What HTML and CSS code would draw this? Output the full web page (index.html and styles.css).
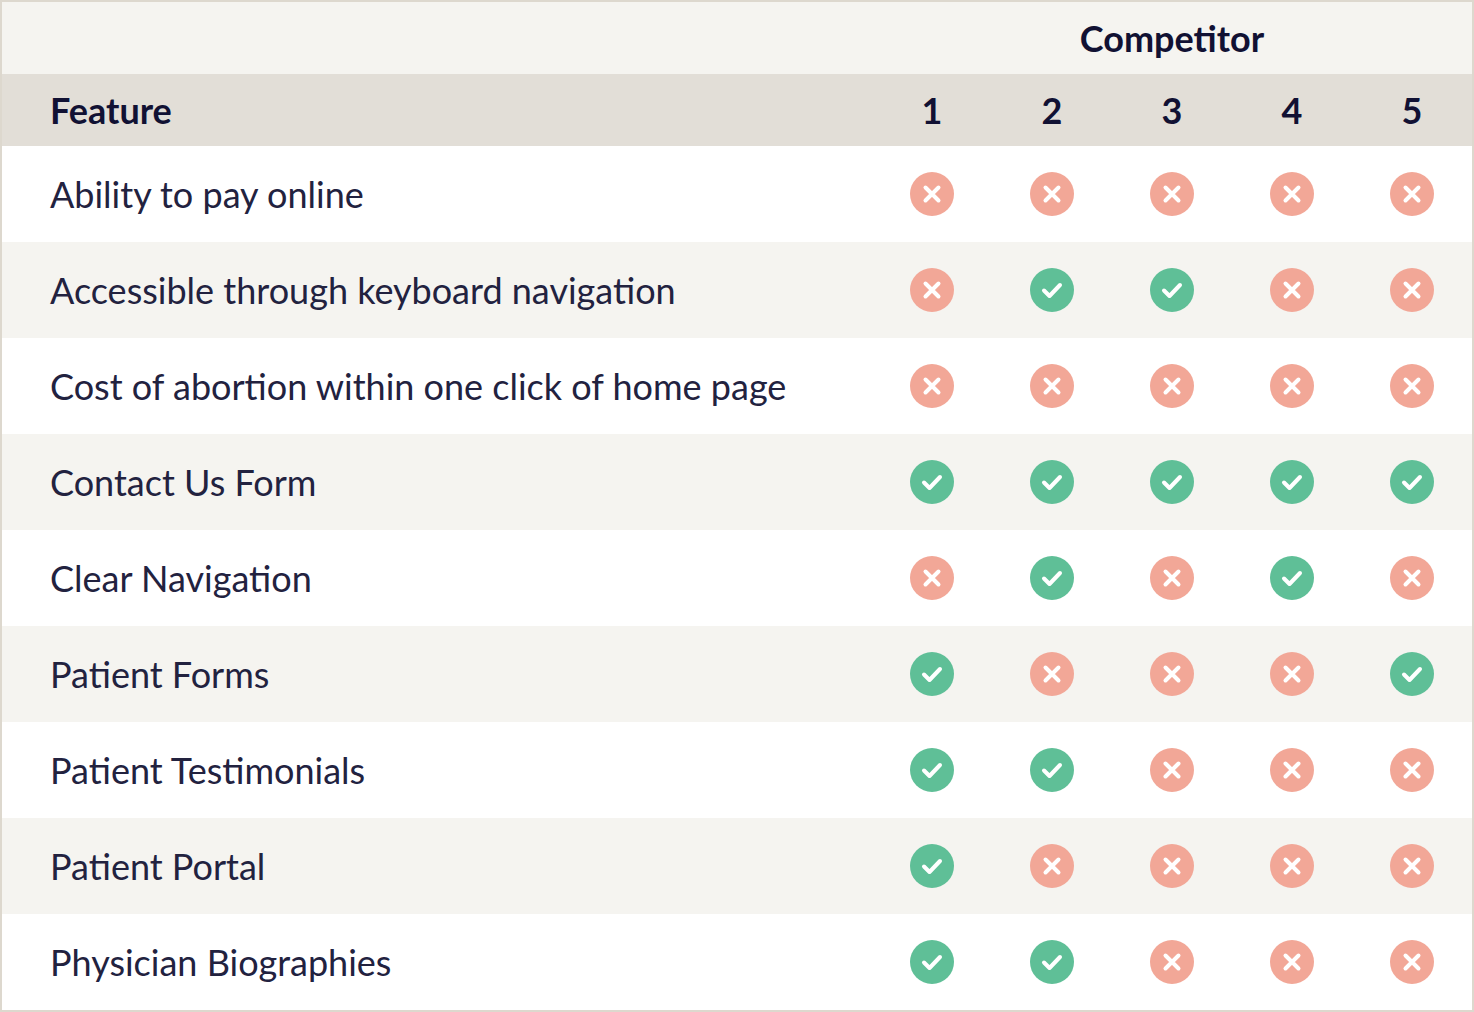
FILE: index.html
```html
<!DOCTYPE html>
<html lang="en">
<head>
<meta charset="utf-8">
<title>Competitor comparison</title>
<link rel="stylesheet" href="styles.css">
</head>
<body>
<svg width="0" height="0" class="defs" aria-hidden="true">
  <symbol id="no" viewBox="0 0 44 44">
    <circle cx="22" cy="22" r="22" fill="#f2a797"/>
    <path d="M15.5 15.5 L28.5 28.5 M28.5 15.5 L15.5 28.5" stroke="#fff" stroke-width="4" stroke-linecap="round" fill="none"/>
  </symbol>
  <symbol id="yes" viewBox="0 0 44 44">
    <circle cx="22" cy="22" r="22" fill="#5fbf97"/>
    <path d="M14 22.5 L19.5 28 L30 17" stroke="#fff" stroke-width="4" stroke-linecap="round" stroke-linejoin="round" fill="none"/>
  </symbol>
</svg>
<div class="frame">
<table class="cmp">
  <thead>
    <tr class="top">
      <th class="feat"></th>
      <th colspan="5" class="comp">Competitor</th>
    </tr>
    <tr class="head">
      <th class="feat">Feature</th>
      <th>1</th><th>2</th><th>3</th><th>4</th><th>5</th>
    </tr>
  </thead>
  <tbody>
    <tr>
      <td class="feat">Ability to pay online</td>
      <td><svg class="ic" width="44" height="44"><use href="#no"/></svg></td>
      <td><svg class="ic" width="44" height="44"><use href="#no"/></svg></td>
      <td><svg class="ic" width="44" height="44"><use href="#no"/></svg></td>
      <td><svg class="ic" width="44" height="44"><use href="#no"/></svg></td>
      <td><svg class="ic" width="44" height="44"><use href="#no"/></svg></td>
    </tr>
    <tr>
      <td class="feat">Accessible through keyboard navigation</td>
      <td><svg class="ic" width="44" height="44"><use href="#no"/></svg></td>
      <td><svg class="ic" width="44" height="44"><use href="#yes"/></svg></td>
      <td><svg class="ic" width="44" height="44"><use href="#yes"/></svg></td>
      <td><svg class="ic" width="44" height="44"><use href="#no"/></svg></td>
      <td><svg class="ic" width="44" height="44"><use href="#no"/></svg></td>
    </tr>
    <tr>
      <td class="feat">Cost of abortion within one click of home page</td>
      <td><svg class="ic" width="44" height="44"><use href="#no"/></svg></td>
      <td><svg class="ic" width="44" height="44"><use href="#no"/></svg></td>
      <td><svg class="ic" width="44" height="44"><use href="#no"/></svg></td>
      <td><svg class="ic" width="44" height="44"><use href="#no"/></svg></td>
      <td><svg class="ic" width="44" height="44"><use href="#no"/></svg></td>
    </tr>
    <tr>
      <td class="feat">Contact Us Form</td>
      <td><svg class="ic" width="44" height="44"><use href="#yes"/></svg></td>
      <td><svg class="ic" width="44" height="44"><use href="#yes"/></svg></td>
      <td><svg class="ic" width="44" height="44"><use href="#yes"/></svg></td>
      <td><svg class="ic" width="44" height="44"><use href="#yes"/></svg></td>
      <td><svg class="ic" width="44" height="44"><use href="#yes"/></svg></td>
    </tr>
    <tr>
      <td class="feat">Clear Navigation</td>
      <td><svg class="ic" width="44" height="44"><use href="#no"/></svg></td>
      <td><svg class="ic" width="44" height="44"><use href="#yes"/></svg></td>
      <td><svg class="ic" width="44" height="44"><use href="#no"/></svg></td>
      <td><svg class="ic" width="44" height="44"><use href="#yes"/></svg></td>
      <td><svg class="ic" width="44" height="44"><use href="#no"/></svg></td>
    </tr>
    <tr>
      <td class="feat">Patient Forms</td>
      <td><svg class="ic" width="44" height="44"><use href="#yes"/></svg></td>
      <td><svg class="ic" width="44" height="44"><use href="#no"/></svg></td>
      <td><svg class="ic" width="44" height="44"><use href="#no"/></svg></td>
      <td><svg class="ic" width="44" height="44"><use href="#no"/></svg></td>
      <td><svg class="ic" width="44" height="44"><use href="#yes"/></svg></td>
    </tr>
    <tr>
      <td class="feat">Patient Testimonials</td>
      <td><svg class="ic" width="44" height="44"><use href="#yes"/></svg></td>
      <td><svg class="ic" width="44" height="44"><use href="#yes"/></svg></td>
      <td><svg class="ic" width="44" height="44"><use href="#no"/></svg></td>
      <td><svg class="ic" width="44" height="44"><use href="#no"/></svg></td>
      <td><svg class="ic" width="44" height="44"><use href="#no"/></svg></td>
    </tr>
    <tr>
      <td class="feat">Patient Portal</td>
      <td><svg class="ic" width="44" height="44"><use href="#yes"/></svg></td>
      <td><svg class="ic" width="44" height="44"><use href="#no"/></svg></td>
      <td><svg class="ic" width="44" height="44"><use href="#no"/></svg></td>
      <td><svg class="ic" width="44" height="44"><use href="#no"/></svg></td>
      <td><svg class="ic" width="44" height="44"><use href="#no"/></svg></td>
    </tr>
    <tr>
      <td class="feat">Physician Biographies</td>
      <td><svg class="ic" width="44" height="44"><use href="#yes"/></svg></td>
      <td><svg class="ic" width="44" height="44"><use href="#yes"/></svg></td>
      <td><svg class="ic" width="44" height="44"><use href="#no"/></svg></td>
      <td><svg class="ic" width="44" height="44"><use href="#no"/></svg></td>
      <td><svg class="ic" width="44" height="44"><use href="#no"/></svg></td>
    </tr>
  </tbody>
</table>
</div>
</body>
</html>
```
FILE: styles.css
```css
html, body {
  margin: 0;
  padding: 0;
  background: #fff;
}
.defs {
  position: absolute;
  width: 0;
  height: 0;
  overflow: hidden;
}
.frame {
  width: 1470px;
  border: 2px solid #ddd8ce;
}
.cmp {
  width: 100%;
  border-collapse: collapse;
  table-layout: fixed;
  font-family: Lato, "Liberation Sans", sans-serif;
  color: #22223f;
}
.cmp th, .cmp td {
  padding: 0;
  text-align: center;
  vertical-align: middle;
}
.cmp th {
  font-weight: 700;
  color: #111133;
  font-size: 36px;
}
.cmp .feat {
  text-align: left;
  padding-left: 48px;
  width: 822px;
}
.top {
  background: #f5f4f0;
  height: 72px;
}
.head {
  background: #e2ded7;
  height: 72px;
}
tbody tr {
  height: 96px;
}
tbody tr:nth-child(even) {
  background: #f5f4f0;
}
tbody td {
  font-size: 36px;
}
.ic {
  display: block;
  margin: 0 auto;
}
```
